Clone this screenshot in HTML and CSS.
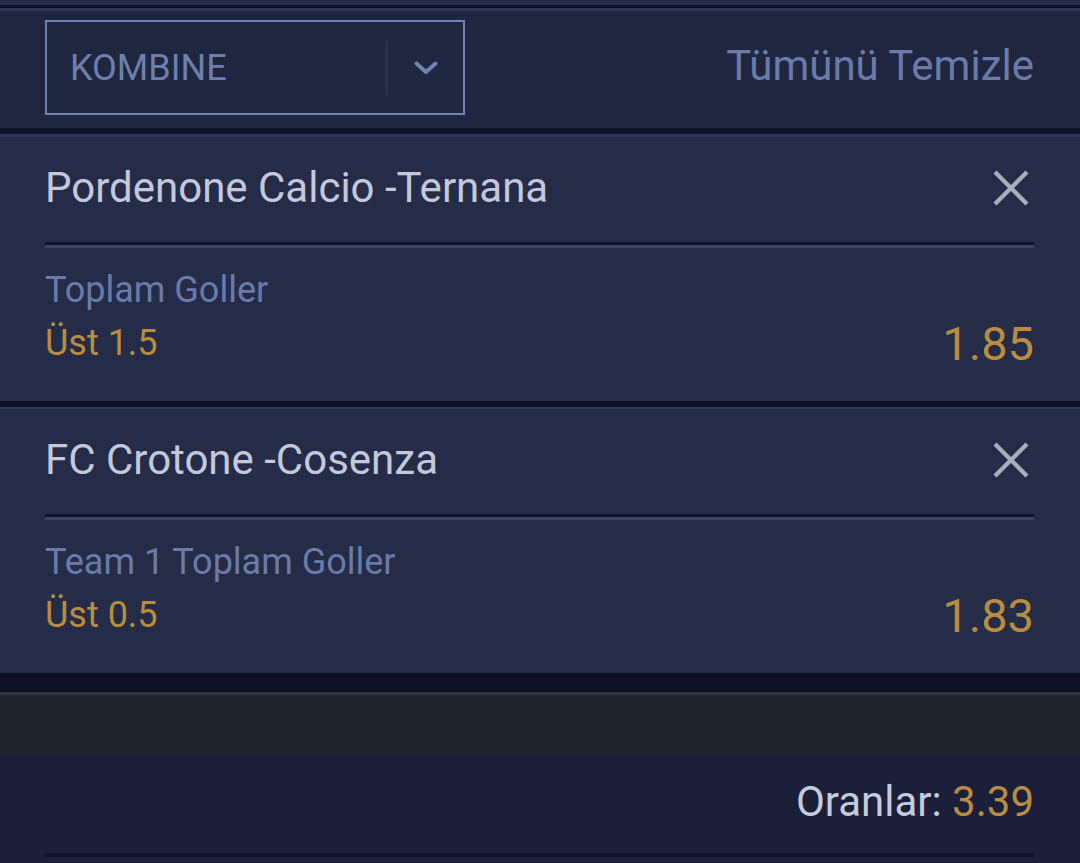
FILE: index.html
```html
<!DOCTYPE html>
<html lang="tr">
<head>
<meta charset="utf-8">
<title>Kupon</title>
<link rel="stylesheet" href="styles.css">
</head>
<body>
<div class="page">
  <div class="strip"></div>
  <div class="divider divider-top"></div>
  <header class="header">
    <div class="select">
      <span class="select-label">KOMBINE</span>
      <span class="select-sep"></span>
      <span class="select-arrow">
        <svg width="24" height="14" viewBox="0 0 24 14"><polyline points="2.5,2.5 12,11 21.5,2.5" fill="none" stroke="#7081b2" stroke-width="4" stroke-linecap="round" stroke-linejoin="round"/></svg>
      </span>
    </div>
    <span class="clear-all">Tümünü Temizle</span>
  </header>
  <div class="divider divider-head"></div>

  <section class="bet">
    <div class="bet-head">
      <span class="bet-title">Pordenone Calcio -Ternana</span>
      <svg class="bet-close" width="36" height="36" viewBox="0 0 36 36"><path d="M2 2 L34 34 M34 2 L2 34" stroke="#a9aebc" stroke-width="4.2"/></svg>
    </div>
    <div class="bet-sep"></div>
    <div class="bet-body">
      <div class="bet-market">Toplam Goller</div>
      <div class="bet-row">
        <span class="bet-pick">Üst 1.5</span>
        <span class="bet-odd">1.85</span>
      </div>
    </div>
  </section>
  <div class="divider divider-card"></div>

  <section class="bet">
    <div class="bet-head">
      <span class="bet-title">FC Crotone -Cosenza</span>
      <svg class="bet-close" width="36" height="36" viewBox="0 0 36 36"><path d="M2 2 L34 34 M34 2 L2 34" stroke="#a9aebc" stroke-width="4.2"/></svg>
    </div>
    <div class="bet-sep"></div>
    <div class="bet-body">
      <div class="bet-market">Team 1 Toplam Goller</div>
      <div class="bet-row">
        <span class="bet-pick">Üst 0.5</span>
        <span class="bet-odd">1.83</span>
      </div>
    </div>
  </section>

  <div class="gap-dark"></div>
  <div class="gap-gray"></div>

  <footer class="footer">
    <div class="total"><span class="total-label">Oranlar:</span> <span class="total-value">3.39</span></div>
    <div class="footer-line"></div>
  </footer>
</div>
</body>
</html>
```

FILE: styles.css
```css
html, body {
  margin: 0;
  padding: 0;
  background: #1b1f3a;
}
body {
  font-family: Roboto, "Noto Sans", "Liberation Sans", sans-serif;
  width: 1080px;
  height: 863px;
  overflow: hidden;
}
.page {
  display: flex;
  flex-direction: column;
  width: 1080px;
}
.strip {
  height: 5px;
  background: #252c48;
}
.divider {
  box-sizing: border-box;
  border-top: 3px solid #0f1226;
  border-bottom: 3px solid #2e3657;
}
.divider-top {
  height: 6px;
}
.divider-head {
  height: 9px;
  border-top-width: 6px;
  border-bottom-width: 3px;
}
.divider-card {
  height: 8px;
  border-top-width: 6px;
  border-bottom-width: 2px;
  border-bottom-color: #333b5d;
}
.header {
  height: 117px;
  background: #1f2640;
  display: flex;
  align-items: flex-start;
  justify-content: space-between;
  padding: 9px 46px 0 45px;
  box-sizing: border-box;
}
.select {
  box-sizing: border-box;
  width: 420px;
  height: 95px;
  border: 2px solid #7081b2;
  display: flex;
  align-items: center;
}
.select-label {
  flex: 1;
  padding-left: 23px;
  font-size: 36px;
  color: #6e7fae;
  line-height: 44px;
}
.select-sep {
  width: 3px;
  height: 54px;
  background: #2a3351;
}
.select-arrow {
  width: 75px;
  display: flex;
  justify-content: center;
  align-items: center;
  padding-top: 1px;
}
.select-arrow svg {
  display: block;
}
.clear-all {
  font-size: 42px;
  line-height: 48px;
  color: #6a7ba9;
  margin-top: 22px;
}
.bet {
  background: #252c48;
  height: 264px;
  box-sizing: border-box;
  padding: 0 46px 0 45px;
  display: flex;
  flex-direction: column;
}
.bet-head {
  height: 105px;
  display: flex;
  align-items: center;
  justify-content: space-between;
  padding-bottom: 3px;
  box-sizing: border-box;
}
.bet-title {
  font-size: 42px;
  line-height: 48px;
  color: #c3c8da;
}
.bet-close {
  display: block;
  margin-right: 5px;
}
.bet-sep {
  height: 6px;
  box-sizing: border-box;
  border-top: 3px solid #111529;
  border-bottom: 3px solid #3a4468;
}
.bet-body {
  padding-top: 20px;
}
.bet-market {
  font-size: 36px;
  line-height: 44px;
  color: #6a7ba9;
}
.bet-row {
  margin-top: 4px;
  height: 54px;
  display: flex;
  align-items: center;
  justify-content: space-between;
}
.bet-pick {
  font-size: 36px;
  line-height: 44px;
  color: #b98d3f;
}
.bet-odd {
  font-size: 47px;
  line-height: 54px;
  color: #b98d3f;
  margin-top: 1px;
}
.gap-dark {
  height: 19px;
  background: #0f1226;
}
.gap-gray {
  height: 63px;
  box-sizing: border-box;
  background: #21252f;
  border-top: 3px solid #30343e;
}
.footer {
  height: 108px;
  background: #1b1f3a;
  padding: 23px 46px 0 45px;
  box-sizing: border-box;
  display: flex;
  flex-direction: column;
}
.total {
  text-align: right;
  font-size: 42px;
  line-height: 48px;
  color: #c6cbdc;
}
.total-value {
  color: #b98d3f;
}
.footer-line {
  margin-top: 27px;
  height: 4px;
  background: #0f1426;
}
```
